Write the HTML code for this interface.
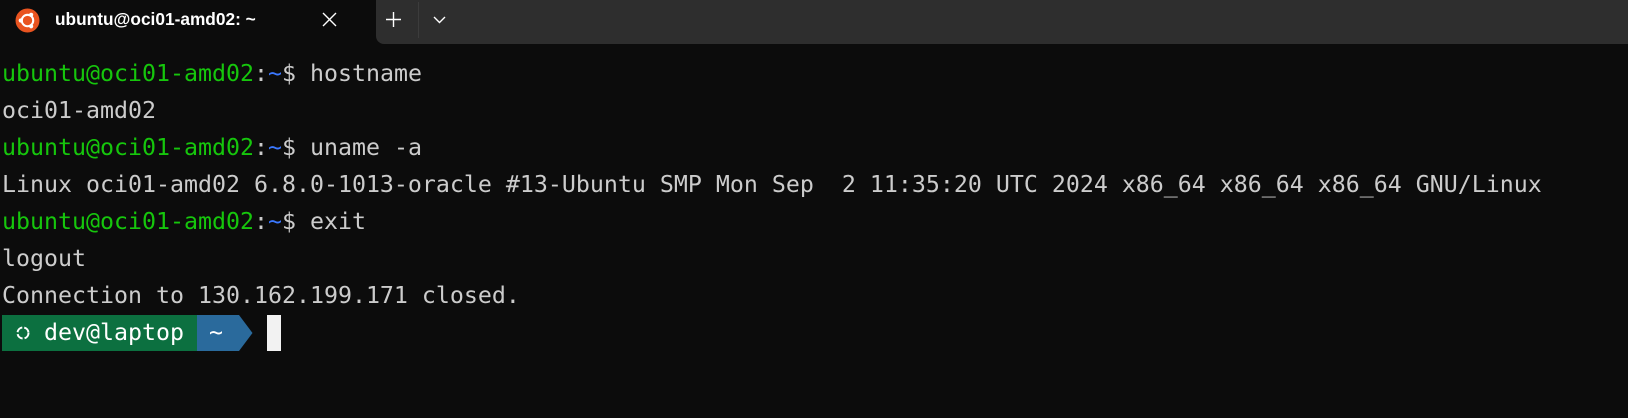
<!DOCTYPE html>
<html><head><style>
html,body{margin:0;padding:0;}
body{width:1628px;height:418px;background:#0c0c0c;position:relative;overflow:hidden;font-family:"DejaVu Sans Mono","Liberation Mono",monospace;}
.bar{position:absolute;left:376px;top:0;right:0;height:44px;background:#2e2e2e;border-bottom-left-radius:8px;}
.sep{position:absolute;left:418px;top:2px;width:1px;height:36px;background:#3c3c3c;}
.tabtitle{position:absolute;left:55px;top:9px;color:#fff;font:bold 17.3px "Liberation Sans",sans-serif;}
.term{position:absolute;left:2px;top:55px;font-size:23.25px;line-height:37px;color:#cccccc;white-space:pre;}
.g{color:#16c60c}.b{color:#3b78ff}
</style></head><body>
<div class="bar"></div><div class="sep"></div>
<svg style="position:absolute;left:15px;top:8px" width="25" height="25" viewBox="0 0 24 24"><circle cx="12" cy="12" r="11.5" fill="#e95420"/><circle cx="12" cy="12" r="5.5" fill="none" stroke="#fff" stroke-width="2"/><circle cx="5.5" cy="12" r="2" fill="#fff"/><circle cx="15.5" cy="6.5" r="2" fill="#fff"/><circle cx="15.5" cy="17.5" r="2" fill="#fff"/></svg>
<div class="tabtitle">ubuntu@oci01-amd02: ~</div>
<svg style="position:absolute;left:322px;top:12px" width="15" height="15"><path d="M1 1L14 14M14 1L1 14" stroke="#fff" stroke-width="1.4"/></svg>
<svg style="position:absolute;left:386px;top:12px" width="15" height="15"><path d="M7.5 0V15M0 7.5H15" stroke="#fff" stroke-width="1.4"/></svg>
<svg style="position:absolute;left:433px;top:16px" width="13" height="8"><path d="M1 1L6.5 6.5L12 1" stroke="#fff" stroke-width="1.4" fill="none"/></svg>
<div class="term"><span class="g">ubuntu@oci01-amd02</span>:<span class="b">~</span>$ hostname
oci01-amd02
<span class="g">ubuntu@oci01-amd02</span>:<span class="b">~</span>$ uname -a
Linux oci01-amd02 6.8.0-1013-oracle #13-Ubuntu SMP Mon Sep  2 11:35:20 UTC 2024 x86_64 x86_64 x86_64 GNU/Linux
<span class="g">ubuntu@oci01-amd02</span>:<span class="b">~</span>$ exit
logout
Connection to 130.162.199.171 closed.</div>
<div style="position:absolute;left:2px;top:315px;width:195px;height:36px;background:#0c7040;"></div>
<svg style="position:absolute;left:15px;top:325px" width="16" height="16"><circle cx="8" cy="8" r="5.5" fill="none" stroke="#fff" stroke-width="2" stroke-dasharray="7 2"/></svg>
<div style="position:absolute;left:44px;top:315px;line-height:36px;font-size:23.25px;color:#fff;">dev@laptop</div>
<div style="position:absolute;left:197px;top:315px;width:42px;height:36px;background:#2a6a9c;"></div>
<svg style="position:absolute;left:239px;top:315px" width="14" height="36"><path d="M0 0L13.5 18L0 36Z" fill="#2a6a9c"/></svg>
<div style="position:absolute;left:209px;top:315px;line-height:36px;font-size:23.25px;color:#fff;">~</div>
<div style="position:absolute;left:267px;top:315px;width:14px;height:36px;background:#f2f2f2;"></div>
</body></html>
